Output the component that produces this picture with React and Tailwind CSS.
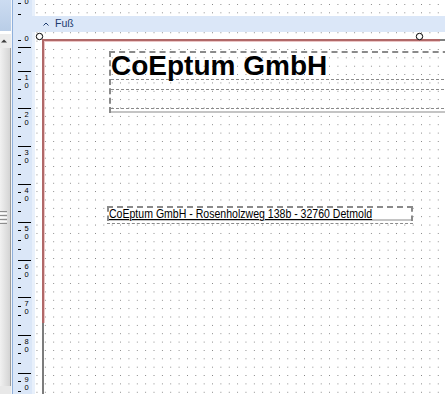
import React from "react";

const GRID = 8.36;

const Dots = ({ id, y = 0 }) => (
  <svg className="absolute inset-0 h-full w-full" aria-hidden="true">
    <defs>
      <pattern id={id} x="1.5" y={y} width={GRID} height={GRID} patternUnits="userSpaceOnUse">
        <rect width="1" height="1" fill="#7e7e7e" shapeRendering="crispEdges" />
      </pattern>
    </defs>
    <rect width="100%" height="100%" fill={`url(#${id})`} />
  </svg>
);

const Scrollbar = () => (
  <div className="flex w-[11px] shrink-0 flex-col bg-[#ececec]">
    <div className="h-[31px] bg-gradient-to-b from-[#ccdcf1] to-[#b9cde7]" />
    <div className="h-[3px] bg-white" />
    <div className="flex h-[14px] items-center pl-[1px]">
      <svg width="6" height="4" viewBox="0 0 6 4">
        <polygon points="0,3.5 3,0.5 6,3.5" fill="#3c3c3c" />
      </svg>
    </div>
    <div className="flex flex-1 flex-col justify-center gap-px border-r border-[#9c9c9c] bg-gradient-to-r from-[#f1f1f1] to-[#d4d4d4]">
      <div className="h-px w-[7px] bg-[#8e8e8e]" />
      <div className="h-px w-[7px] bg-[#fafafa]" />
      <div className="h-px w-[7px] bg-[#8e8e8e]" />
      <div className="h-px w-[7px] bg-[#fafafa]" />
      <div className="h-px w-[7px] bg-[#8e8e8e]" />
      <div className="h-px w-[7px] bg-[#fafafa]" />
      <div className="h-px w-[7px] bg-[#8e8e8e]" />
    </div>
    <div className="h-[8px] bg-[#e8e8e8]" />
  </div>
);

const Tick = ({ y, long }) => (
  <rect x="5" y={y} width={long ? 13 : 3} height="1" fill="#000" shapeRendering="crispEdges" />
);

const Digit = ({ y, children }) => (
  <text x="11.5" y={y} fontSize="7.5" fill="#000" fontFamily="'Liberation Sans', Arial, sans-serif">
    {children}
  </text>
);

const Ruler = () => {
  const cms = Array.from({ length: 9 }, (_, i) => 70.5 + i * 37.8);
  return (
    <div className="relative w-[22px] shrink-0 bg-[#dbe7f8]">
      <div className="absolute inset-y-0 right-0 w-[3px] bg-[#e8f0fb]" />
      <div className="absolute inset-x-0 top-[16px] h-[16px] bg-[#dbe7f8]" />
      <svg className="absolute inset-0" width="22" height="394">
        {/* previous band, cut at the top */}
        <Digit y={3.5}>0</Digit>
        <Tick y={3} />
        <Tick y={14} />
        {/* Fuß band */}
        <Digit y={41}>0</Digit>
        <Tick y={40} />
        <Tick y={47} long />
        <Tick y={52} />
        <Tick y={62} />
        {cms.map((l, i) => (
          <g key={i}>
            <Tick y={l} long />
            <Digit y={l + 9}>{i + 1}</Digit>
            <Tick y={l + 8.5} />
            <Digit y={l + 17}>0</Digit>
            <Tick y={l + 18} />
            <Tick y={l + 27.5} />
          </g>
        ))}
      </svg>
    </div>
  );
};

const Handle = ({ className }) => (
  <svg className={`absolute ${className}`} width="9" height="9" viewBox="0 0 9 9">
    <circle cx="4.5" cy="4.5" r="3.2" fill="#fff" stroke="#000" strokeWidth="1" />
  </svg>
);

export default function App() {
  return (
    <div className="flex h-[394px] w-[445px] overflow-hidden bg-white font-['Liberation_Sans',Arial,sans-serif]">
      <Scrollbar />
      <div className="w-px shrink-0 bg-[#f6f6f6]" />
      <div className="w-px shrink-0 bg-[#8fb0dc]" />
      <Ruler />

      <div className="flex min-w-0 flex-1 flex-col">
        <div className="relative h-[16px] shrink-0">
          <Dots id="top" y={4} />
        </div>

        <div className="flex h-[16px] shrink-0 items-center gap-[6px] bg-[#dbe7f8] pl-[8px] text-[10.5px] text-[#1c3b6e]">
          <svg width="6" height="4" viewBox="0 0 6 4">
            <polyline points="0.5,3.5 3,1 5.5,3.5" fill="none" stroke="#1c3b6e" strokeWidth="1" />
          </svg>
          <span>Fuß</span>
        </div>

        <div className="relative flex-1 overflow-hidden">
          <Dots id="band" y={0.3} />

          {/* page margins */}
          <div className="absolute left-[7px] top-[7px] h-[2px] w-[398px] bg-[#b06868]" />
          <div className="absolute left-[9px] top-[9px] h-px w-[396px] bg-[#ecc6c6]" />
          <div className="absolute left-[405px] top-[7px] h-[2px] w-[10px] bg-[#808080]" />
          <div className="absolute left-[7px] top-[7px] h-[284px] w-[2px] bg-[#b06868]" />
          <div className="absolute left-[9px] top-[9px] h-[282px] w-px bg-[#ecc6c6]" />
          <div className="absolute left-[7px] top-[291px] h-[80px] w-[2px] bg-[#7c7c7c]" />

          <Handle className="left-[0px] top-[0px]" />
          <Handle className="left-[380px] top-[-0.5px]" />

          {/* header fields */}
          <div className="absolute left-[74px] top-[19px] w-[360px] border-l-2 border-t-2 border-dashed border-[#8a8a8a]">
            <div className="h-[27px] whitespace-nowrap border-b border-dashed border-[#8a8a8a] text-[28px] font-bold leading-[26px] text-black">
              CoEptum GmbH
            </div>
            <div className="h-[10px] border-b border-dashed border-[#8a8a8a]" />
            <div className="h-[19px] border-b border-dashed border-[#8a8a8a]" />
            <div className="h-[2px]" />
            <div className="h-[2px] bg-[#c4c4c4]" />
          </div>

          {/* address line */}
          <div className="absolute left-[72px] top-[173.5px] w-[306px]">
            <div className="border-x-2 border-t-2 border-dashed border-[#8a8a8a] bg-white">
              <div className="h-[11px] whitespace-nowrap text-[13px] leading-[11px] text-black">
                <span className="inline-block origin-left scale-x-[0.811] underline underline-offset-[1px]">
                  CoEptum GmbH - Rosenholzweg 138b - 32760 Detmold
                </span>
              </div>
              <div className="h-[2px] bg-[#c4c4c4]" />
            </div>
            <div className="mt-[2px] border-t border-dashed border-[#8a8a8a]" />
          </div>
        </div>
      </div>
    </div>
  );
}
